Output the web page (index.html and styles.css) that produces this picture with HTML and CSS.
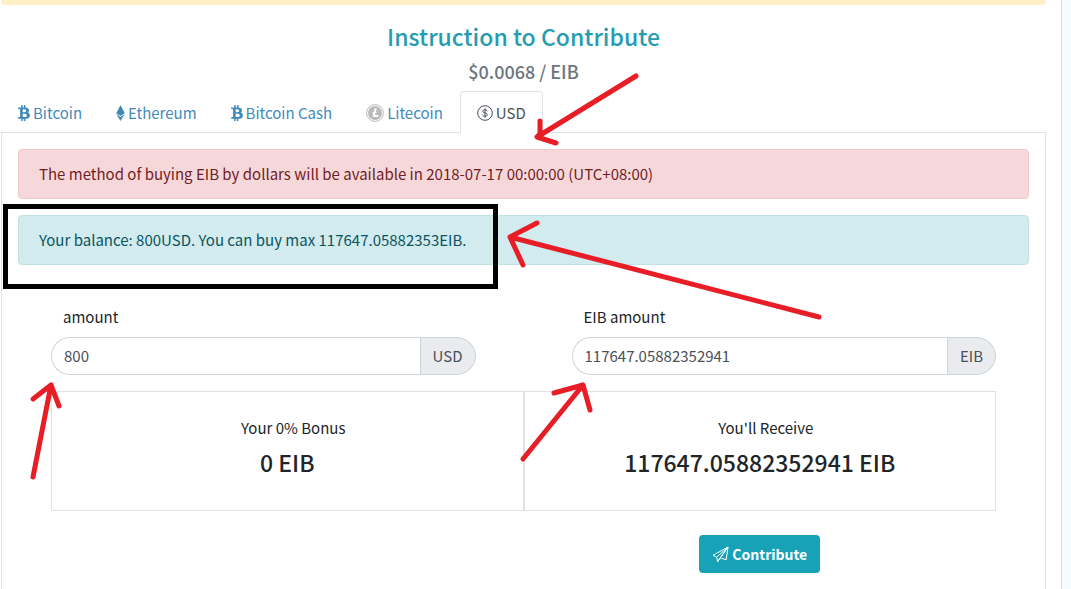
FILE: index.html
```html
<!DOCTYPE html>
<html lang="en">
<head>
<meta charset="utf-8">
<title>Instruction to Contribute</title>
<link rel="stylesheet" href="styles.css">
</head>
<body>
<main class="page">
  <div class="notice"></div>
  <h1 class="title">Instruction to Contribute</h1>
  <p class="price">$0.0068 / EIB</p>

  <nav class="tabs">
    <a class="tab" href="#btc"><svg class="icon icon-btc" viewBox="0 0 384 512"><path d="M310.204 242.638c27.73-14.18 45.377-39.39 41.28-81.3-5.358-57.351-52.458-76.573-114.85-81.929V0h-48.528v77.203c-12.605 0-25.525.315-38.444.63V0h-48.53v79.409c-17.842.539-38.622.276-97.37 0v51.678c38.314-.678 58.417-3.14 63.023 21.427v217.429c-2.925 19.492-18.524 16.685-53.255 16.071L3.765 443.68c88.481 0 97.37.315 97.37.315V512h48.53v-67.06c13.234.315 26.154.315 38.444.315V512h48.528v-68.005c81.299-4.412 135.647-24.894 142.895-101.467 5.671-61.446-23.32-88.862-69.326-99.89zM150.608 134.553c27.415 0 113.126-8.507 113.126 48.528 0 54.515-85.71 48.212-113.126 48.212v-96.74zm0 251.776V279.821c32.772 0 133.127-9.138 133.127 53.255-.001 60.186-100.355 53.253-133.127 53.253z"/></svg>Bitcoin</a>
    <a class="tab" href="#eth"><svg class="icon icon-eth" viewBox="0 0 320 512" preserveAspectRatio="none"><path d="M311.900 260.800L160 353.600 8 260.800 160 0zM160 383.400L8 290.600 160 512l152-221.400z"/></svg>Ethereum</a>
    <a class="tab" href="#bch"><svg class="icon icon-btc" viewBox="0 0 384 512"><path d="M310.204 242.638c27.73-14.18 45.377-39.39 41.28-81.3-5.358-57.351-52.458-76.573-114.85-81.929V0h-48.528v77.203c-12.605 0-25.525.315-38.444.63V0h-48.53v79.409c-17.842.539-38.622.276-97.37 0v51.678c38.314-.678 58.417-3.14 63.023 21.427v217.429c-2.925 19.492-18.524 16.685-53.255 16.071L3.765 443.68c88.481 0 97.37.315 97.37.315V512h48.53v-67.06c13.234.315 26.154.315 38.444.315V512h48.528v-68.005c81.299-4.412 135.647-24.894 142.895-101.467 5.671-61.446-23.32-88.862-69.326-99.89zM150.608 134.553c27.415 0 113.126-8.507 113.126 48.528 0 54.515-85.71 48.212-113.126 48.212v-96.74zm0 251.776V279.821c32.772 0 133.127-9.138 133.127 53.255-.001 60.186-100.355 53.253-133.127 53.253z"/></svg>Bitcoin Cash</a>
    <a class="tab" href="#ltc"><svg class="icon icon-ltc" viewBox="0 0 18 18"><circle cx="9" cy="9" r="8.400" fill="#fff" stroke="#bbb"/><circle cx="9" cy="9" r="7" fill="#b9b9b9"/><path d="M9.800 4.200L7.800 12H12.400M6.600 9.600l3.600-1.700" fill="none" stroke="#fff" stroke-width="2"/></svg>Litecoin</a>
    <a class="tab tab-active" href="#usd" aria-current="page"><svg class="icon icon-usd" viewBox="0 0 16 16"><g fill="none" stroke="currentColor"><circle cx="8" cy="8" r="7.300"/><path d="M10.300 6.200C10 5.200 9.100 4.800 8 4.800c-1.300 0-2.200.6-2.200 1.500 0 2.300 4.500 1 4.500 3.400 0 .9-.9 1.500-2.200 1.500-1.300 0-2.200-.5-2.500-1.500M8 3.300v9.400"/></g></svg>USD</a>
  </nav>

  <section class="panel">
    <div class="alert alert-danger">The method of buying EIB by dollars will be available in 2018-07-17 00:00:00 (UTC+08:00)</div>
    <div class="alert alert-info">Your balance: 800USD. You can buy max 117647.05882353EIB.</div>

    <form class="form">
      <div class="fields">
        <div class="field">
          <label class="label" for="usd-amount">amount</label>
          <div class="group">
            <input class="input" id="usd-amount" type="text" value="800">
            <span class="unit">USD</span>
          </div>
        </div>
        <div class="field">
          <label class="label" for="eib-amount">EIB amount</label>
          <div class="group">
            <input class="input" id="eib-amount" type="text" value="117647.05882352941">
            <span class="unit">EIB</span>
          </div>
        </div>
      </div>
      <div class="summary">
        <div class="cell">
          <div class="cell-name">Your 0% Bonus</div>
          <div class="cell-value">0 EIB</div>
        </div>
        <div class="cell">
          <div class="cell-name">You'll Receive</div>
          <div class="cell-value">117647.05882352941 EIB</div>
        </div>
      </div>
      <div class="actions">
        <button class="submit" type="button"><svg class="icon icon-plane" viewBox="0 0 17 17"><path d="M16 1L1 9.300l3.700 1.900L16 1l-1.800 12.800-6-1.900M4.700 11.200l.8 4.600L16 1M5.500 15.800l2.700-3.900L16 1" fill="none" stroke="currentColor" stroke-linejoin="round"/></svg>Contribute</button>
      </div>
    </form>
  </section>
</main>

<svg class="marks" width="1071" height="589" viewBox="0 0 1071 589" aria-hidden="true">
  <rect x="5.500" y="206.500" width="490" height="80" fill="none" stroke="#000" stroke-width="5"/>
  <g fill="none" stroke="#e81e27" stroke-width="5" stroke-linecap="round" stroke-linejoin="round">
    <path d="M636 76L537 137M540 121V134L537 137L556 143"/>
    <path d="M819 317L510 237M537 223L510 237L523 265"/>
    <path d="M33 477L51 385M33 399L51 385L59 406"/>
    <path d="M523 459L583 385M554 393L583 385L590 410"/>
  </g>
</svg>
</body>
</html>
```

FILE: styles.css
```css
* {
  box-sizing: border-box;
}

body {
  margin: 0;
  background: #f6fbfd;
  color: #212529;
  font-family: "Noto Sans CJK SC", "Noto Sans", sans-serif;
  font-size: 15px;
  font-weight: 400;
  line-height: 24px;
}

.page {
  min-height: 100vh;
  margin-right: 9px;
  padding: 0 15px 0 1px;
  border-right: 1px solid #d9dadb;
  background: #fff;
}

.notice {
  height: 5px;
  border-radius: 0 0 4px 4px;
  background: #fff0c8;
}

.title,
.price {
  margin: 0;
  font-weight: 500;
  text-align: center;
}

.title {
  padding-top: 15px;
  color: #269cb0;
  font-size: 23px;
  line-height: 32px;
}

.price {
  padding: 7px 0 8px;
  color: #6c757d;
  font-size: 18px;
}

.tabs {
  display: flex;
}

.tab {
  display: flex;
  align-items: center;
  gap: 3px;
  padding: 9px 16px 7px;
  border: 1px solid transparent;
  border-bottom: 0;
  color: #428bb8;
  text-decoration: none;
}

.tab-active {
  position: relative;
  z-index: 1;
  margin-bottom: -1px;
  padding-bottom: 8px;
  border-color: #dee2e6;
  border-radius: 4px 4px 0 0;
  background: #fff;
  color: #495057;
}

.icon {
  flex: none;
  fill: currentColor;
}

.icon-btc {
  width: 12px;
  height: 16px;
}

.icon-eth {
  width: 9px;
  height: 16px;
}

.icon-ltc {
  width: 18px;
  height: 18px;
}

.icon-usd {
  width: 16px;
  height: 16px;
}

.icon-plane {
  width: 17px;
  height: 17px;
}

.panel {
  min-height: 457px;
  padding: 16px;
  border: 1px solid #dee2e6;
  border-bottom: 0;
}

.alert {
  margin-bottom: 16px;
  padding: 12px 20px;
  border: 1px solid;
  border-radius: 4px;
}

.alert-danger {
  border-color: #f0c8cd;
  background: #f7d8da;
  color: #721c24;
}

.alert-info {
  border-color: #bfe3e4;
  background: #d1ebef;
  color: #0c5460;
}

.form {
  padding: 24px 33px 0;
}

.fields {
  display: grid;
  grid-template-columns: 1fr 1fr;
  gap: 96px;
}

.label {
  display: block;
  margin-bottom: 8px;
  padding-left: 12px;
}

.group {
  display: flex;
  height: 38px;
}

.input {
  flex: 1;
  min-width: 0;
  padding: 0 12px;
  border: 1px solid #ced4da;
  border-right: 0;
  border-radius: 19px 0 0 19px;
  background: #fff;
  color: #495057;
  font: inherit;
}

.unit {
  padding: 6px 12px;
  border: 1px solid #ced4da;
  border-radius: 0 19px 19px 0;
  background: #e9ebee;
  color: #495057;
}

.summary {
  display: grid;
  grid-template-columns: 1fr 1fr;
  margin-top: 16px;
}

.cell {
  padding: 24px 16px 32px;
  border: 1px solid #dee2e6;
  text-align: center;
}

.cell-name {
  padding-left: 12px;
}

.cell-value {
  margin-top: 6px;
  font-size: 23px;
  font-weight: 500;
  line-height: 32px;
}

.actions {
  display: flex;
  justify-content: center;
  width: 50%;
  margin: 24px 0 0 auto;
}

.submit {
  display: flex;
  align-items: center;
  gap: 3px;
  height: 38px;
  padding: 0 13px;
  border: 0;
  border-radius: 4px;
  background: #17a2b8;
  color: #fff;
  font: inherit;
  font-size: 14px;
  font-weight: 700;
}

.marks {
  position: absolute;
  z-index: 2;
  top: 0;
  left: 0;
  pointer-events: none;
}
```
